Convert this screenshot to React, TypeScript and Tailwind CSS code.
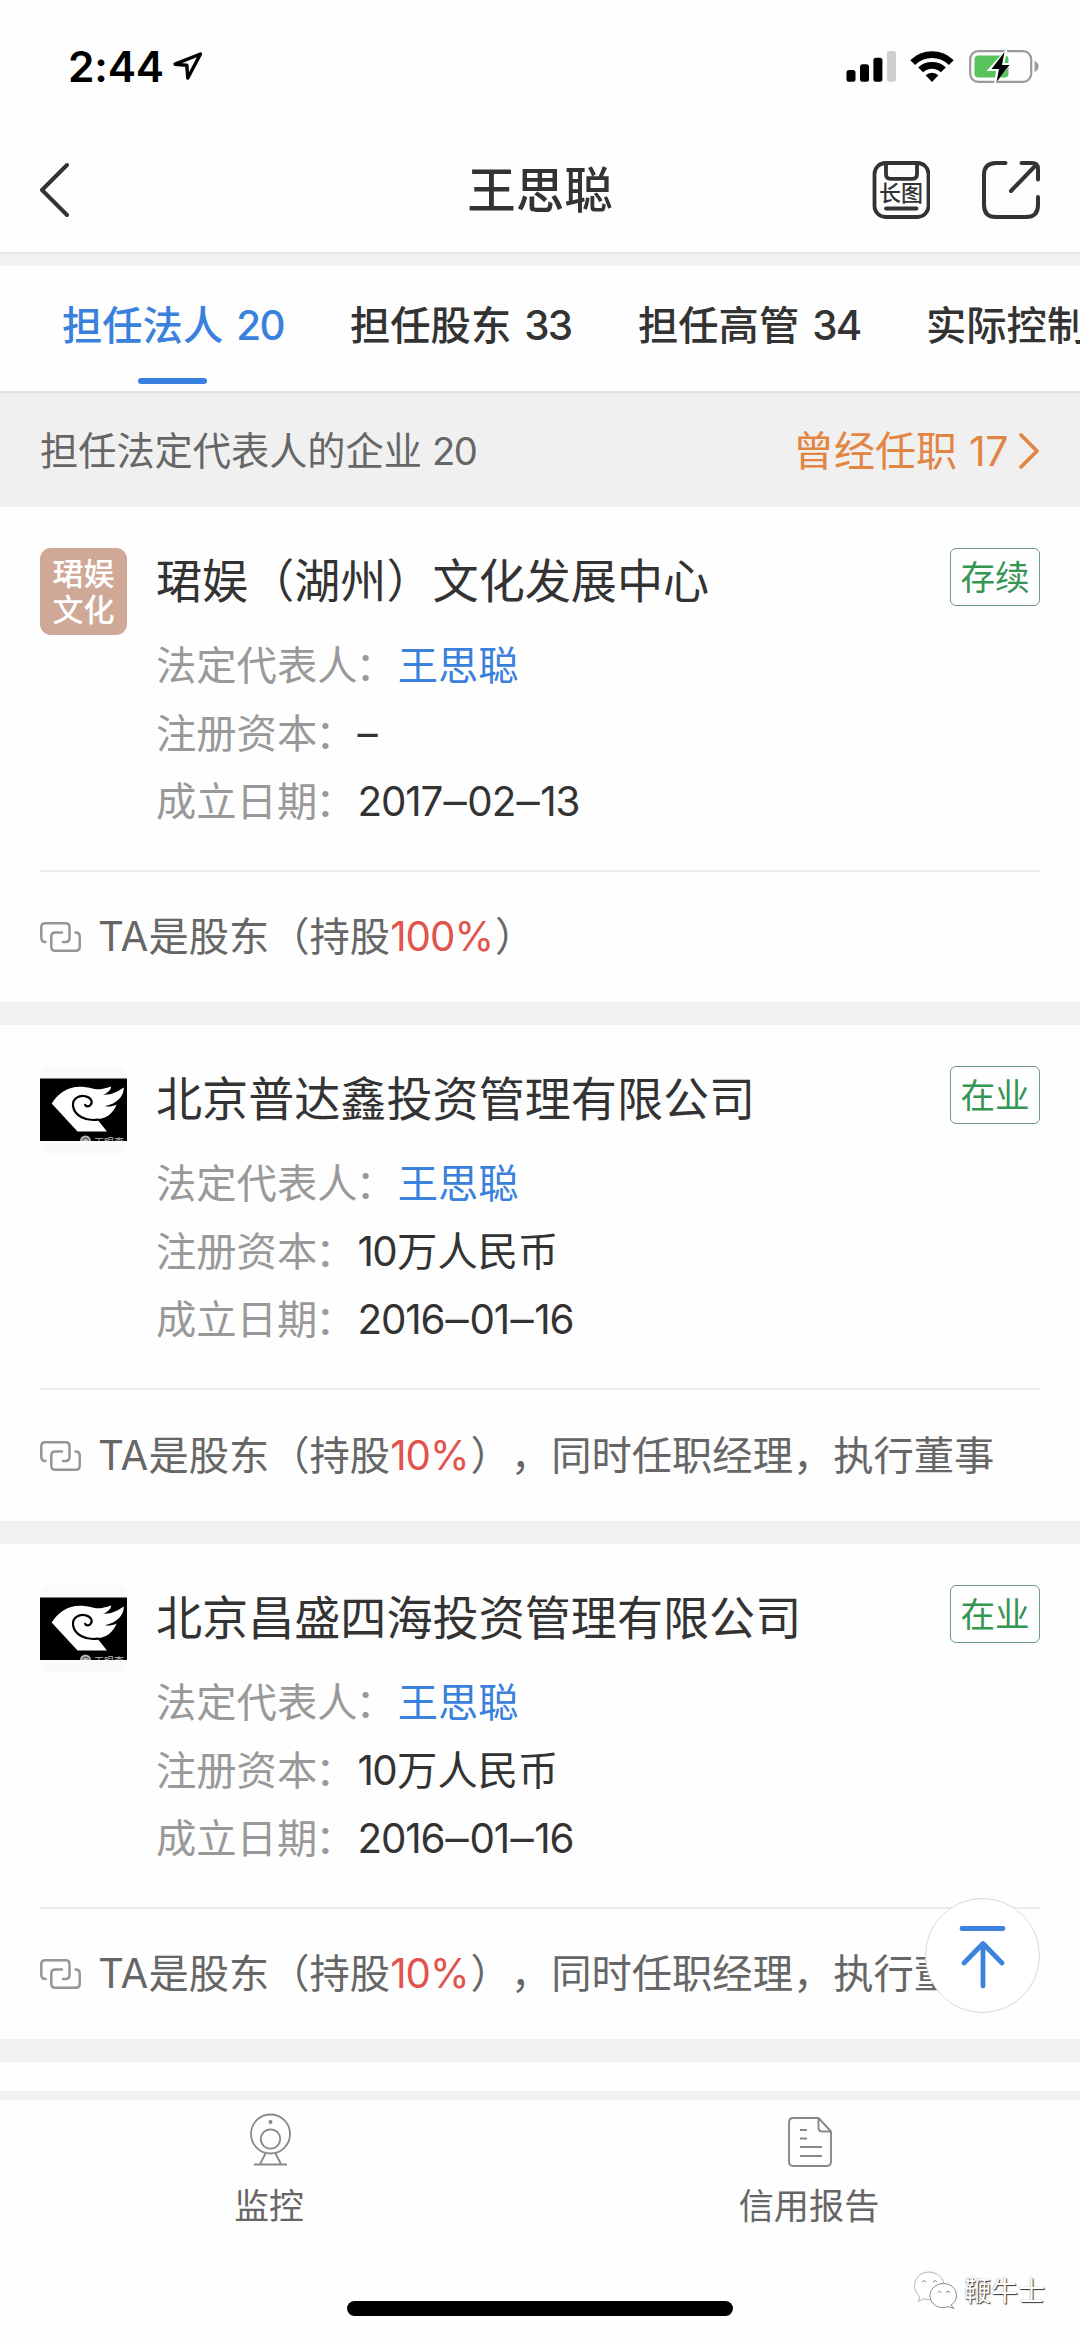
import type { ReactNode } from "react";

type Company = {
  name: string;
  status: string;
  capital: ReactNode;
  date: string;
  share: string;
  extra?: string;
  logo: ReactNode;
  height: string;
};

function StatusBar() {
  return (
    <div className="flex h-[132px] shrink-0 items-start justify-between pt-[50px] pr-[40px] pl-[68px]">
      <div className="flex h-8 items-center">
        <span className="pt-px text-[42.5px] leading-8 font-semibold tracking-[-0.2px] text-black">2:44</span>
        <svg className="ml-[8px]" width="32" height="32" viewBox="0 0 32 32" fill="none" stroke="#000" strokeWidth="3.4" strokeLinejoin="round">
          <path d="M28.5 4 L3 14.2 L14.8 15.2 L15.8 28 Z" />
        </svg>
      </div>
      <div className="flex h-8 items-start">
        <svg width="50" height="32" viewBox="0 0 50 32">
          <rect x="0.5" y="20" width="9" height="11.7" rx="2.5" />
          <rect x="14" y="14.3" width="9" height="17.4" rx="2.5" />
          <rect x="27.4" y="7.8" width="9" height="23.9" rx="2.5" />
          <rect x="41" y="1" width="9" height="30.7" rx="2" fill="#cfcfcf" />
        </svg>
        <svg className="ml-[14px]" width="44" height="33" viewBox="0 0 44 33">
          <path d="M0.3 10.2 A30.5 30.5 0 0 1 43.7 10.2 L38.9 15.1 A23.7 23.7 0 0 0 5.1 15.1 Z" />
          <path d="M8.2 17.6 A19.5 19.5 0 0 1 35.8 17.6 L30.9 22.3 A12.8 12.8 0 0 0 13.1 22.3 Z" />
          <path d="M15.6 25.3 A9 9 0 0 1 28.4 25.3 L22 32 Z" />
        </svg>
        <svg className="ml-[15px]" width="71" height="36" viewBox="0 0 71 36" fill="none">
          <rect x="1.2" y="1.2" width="61" height="30.6" rx="8" stroke="#9b9b9d" strokeWidth="2.2" />
          <path d="M65.5 11 C71 13 71 20 65.5 22 Z" fill="#9b9b9d" />
          <rect x="5.5" y="5.5" width="34" height="22" rx="4" fill="#58c35c" />
          <path d="M37.5 -1 L17.5 21 H27 L25 35 L43 13 H35.5 L38.5 -1 Z" fill="#fff" />
          <path d="M35.5 2 L22.5 19 H30 L27.5 32 L40.5 15 H33 Z" fill="#000" />
        </svg>
      </div>
    </div>
  );
}

function Header() {
  return (
    <header className="flex h-[120px] shrink-0 items-start justify-between pt-[28px] pr-[40px] pl-[40px]">
      <svg width="168" height="60" viewBox="0 0 168 60" fill="none" stroke="#333" strokeWidth="4" strokeLinecap="round" strokeLinejoin="round">
        <path d="M27 5 L2 30 L27 55" />
      </svg>
      <h1 className="pt-px text-[48.5px] leading-[60px] font-medium text-[#333]">王思聪</h1>
      <div className="flex w-[168px] gap-[52px]">
        <div className="relative h-[60px] w-[58px]">
          <svg width="58" height="60" viewBox="0 0 58 60" fill="none" stroke="#333" strokeWidth="3.8" strokeLinecap="round">
            <rect x="2.5" y="3" width="54" height="54" rx="11" />
            <path d="M14 3 V14 Q14 18.8 18.5 18.8 H40.5 Q45 18.8 45 14 V3 M14 48.5 H44.5" />
          </svg>
          <span className="absolute top-[22px] left-[7px] text-[22px] leading-[22px] font-medium whitespace-nowrap text-[#333]">长图</span>
        </div>
        <svg width="58" height="60" viewBox="0 0 58 60" fill="none" stroke="#333" strokeWidth="4" strokeLinecap="round" strokeLinejoin="round">
          <path d="M23.5 3 H14 Q2 3 2 15 V45 Q2 57 14 57 H44 Q56 57 56 45 V37" />
          <path d="M39.5 3 H50 Q56 3 56 9 V19.5 M54.5 4.5 L29 31" />
        </svg>
      </div>
    </header>
  );
}

function Tabs() {
  const tabs = [
    { label: "担任法人", count: "20" },
    { label: "担任股东", count: "33" },
    { label: "担任高管", count: "34" },
    { label: "实际控制", count: "" },
  ];
  return (
    <nav className="flex h-[127px] shrink-0 overflow-hidden border-b-2 border-[#dfdfdf] pl-[62px]">
      {tabs.map((tab, i) => (
        <div key={tab.label} className="flex w-72 shrink-0 flex-col whitespace-nowrap">
          <div className={"flex h-[112px] items-center pt-[8px] text-[40.3px] leading-[50px] font-medium " + (i === 0 ? "text-[#3a80dd]" : "text-[#333]")}>
            <span>{tab.label}</span>
            {tab.count && <span className="ml-[13px] tracking-[-1.6px]">{tab.count}</span>}
          </div>
          {i === 0 && <div className="ml-[76px] h-[6px] w-[69px] rounded-full bg-[#3a80e0]" />}
        </div>
      ))}
    </nav>
  );
}

function Summary() {
  return (
    <div className="flex h-[114px] shrink-0 items-center justify-between bg-[#f1f0f1] pt-[2px] pr-[40px] pl-[40px]">
      <span className="text-[38.2px] leading-[60px] text-[#666]">
        担任法定代表人的企业<span className="ml-[10px] tracking-[-1.5px]">20</span>
      </span>
      <span className="flex items-center pb-px text-[41px] leading-[60px] text-[#e28543]">
        曾经任职<span className="ml-[12px] tracking-[-0.5px]">17</span>
        <svg className="ml-[10px]" width="22" height="38" viewBox="0 0 22 38" fill="none" stroke="currentColor" strokeWidth="3.8" strokeLinecap="round" strokeLinejoin="round">
          <path d="M3 3 L19 19 L3 35" />
        </svg>
      </span>
    </div>
  );
}

function TextLogo() {
  return (
    <div className="flex h-[87px] w-[87px] flex-col items-center justify-center rounded-[11px] bg-[#cfa898] text-[31px] leading-[36px] font-medium text-white">
      <span>珺娱</span>
      <span>文化</span>
    </div>
  );
}

function BirdLogo() {
  return (
    <svg width="87" height="90" viewBox="0 0 87 90">
      <rect width="87" height="88" rx="11" fill="#fbfafa" />
      <rect y="12.5" width="87" height="62.5" fill="#000" />
      <path
        fill="#fff"
        d="M11.7 37.5 C18 28 27 20.8 40 20.8 C50 20.8 55 24.5 62 23 C66 22.3 69 21.2 71.2 20.6 C70.8 24.5 67 27.5 63 28.8 C71 29.3 78 25.5 83.8 21.6 C84 31 76 38 65 40.3 C69 40.8 73 40.2 76.6 38.4 C73 47.5 65.5 53.2 57 53 L67 65.5 H37.5 Z"
      />
      <path fill="none" stroke="#000" strokeWidth="2.2" strokeLinecap="round" d="M58 53.6 C46 55.5 34.5 50 33 40 C32.2 32 40 29 45 30.2 C51 31.5 53 35.5 50.8 38.7 C49 41.3 45.8 40.6 45.2 38.8" />
      <svg y="68" width="87" height="7" viewBox="0 0 87 7">
        <circle cx="45.5" cy="7" r="5.5" fill="#b5b5b5" />
        <path d="M42 6.5 Q46 1.5 49 6.5" stroke="#333" fill="none" />
        <text x="54" y="12" fontSize="10" fill="#bbb">天眼查</text>
      </svg>
    </svg>
  );
}

function LinkIcon() {
  return (
    <svg width="41" height="30" viewBox="0 0 41 30" fill="none" stroke="#969696" strokeWidth="2.5" strokeLinecap="round" strokeLinejoin="round">
      <path d="M5.5 20 Q1.3 20 1.3 16 V5.3 Q1.3 1.3 5.3 1.3 H25.5 Q29.5 1.3 29.5 5.3 V16 Q29.5 20 25.5 20 H23" />
      <path d="M35.5 10.5 Q39.7 10.5 39.7 14.5 V24.7 Q39.7 28.7 35.7 28.7 H15.3 Q11.3 28.7 11.3 24.7 V14.5 Q11.3 10.5 15.3 10.5 H22" />
    </svg>
  );
}

function Row({ label, children }: { label: string; children: ReactNode }) {
  return (
    <div className="flex h-[68px] items-center text-[40.3px] leading-[68px]">
      <span className="text-[#999]">
        {label}
        <span className="inline-block -translate-x-[2px]">：</span>
      </span>
      {children}
    </div>
  );
}

function DateText({ value }: { value: string }) {
  return (
    <span className="tracking-[-1.1px] text-[#333]">
      {value.split("–").map((part, i) => (
        <span key={i}>
          {i > 0 && <span className="mx-[3px] inline-block scale-x-115">–</span>}
          {part}
        </span>
      ))}
    </span>
  );
}

function Card({ c }: { c: Company }) {
  return (
    <article className={"flex shrink-0 flex-col bg-[#fefefe] px-[40px] " + c.height}>
      <div className="flex h-[363px] shrink-0 pt-[41px]">
        {c.logo}
        <div className="ml-[29px] flex grow flex-col">
          <div className="flex justify-between">
            <h2 className="text-[46.1px] leading-[66px] text-[#333]">{c.name}</h2>
            <span className="flex h-[58px] w-[90px] items-center justify-center rounded-[6px] border border-[#6f9d80] text-[34.6px] leading-[50px] text-[#359553]">
              {c.status}
            </span>
          </div>
          <div className="mt-[18px] flex flex-col">
            <Row label="法定代表人">
              <span className="text-[#3a80dd]">王思聪</span>
            </Row>
            <Row label="注册资本">
              <span className="text-[#333]">{c.capital}</span>
            </Row>
            <Row label="成立日期">
              <DateText value={c.date} />
            </Row>
          </div>
        </div>
      </div>
      <div className="h-[2px] shrink-0 bg-[#edebed]" />
      <div className="flex grow items-center text-[40.3px] leading-[60px] whitespace-nowrap text-[#666]">
        <LinkIcon />
        <p className="ml-[17px]">
          TA是股东（持股<span className="mr-[2px] tracking-[-1px] text-[#e0544c]">{c.share}</span>）{c.extra}
        </p>
      </div>
    </article>
  );
}

function BottomBar() {
  return (
    <footer className="flex h-[239px] shrink-0 bg-[#fefefe] text-[34.8px] leading-[50px] text-[#666]">
      <div className="flex w-1/2 flex-col items-center pt-[13px]">
        <svg width="42" height="54" viewBox="0 0 42 54" fill="none" stroke="#888" strokeWidth="1.8">
          <circle cx="21.5" cy="21" r="19.5" />
          <circle cx="21.5" cy="26" r="9.7" />
          <circle cx="21.5" cy="9" r="2" fill="#888" stroke="none" />
          <path d="M16.5 40.5 L11 51 M26.5 40.5 L32 51 M5 51.5 H38" />
        </svg>
        <span className="mt-[14px] -ml-[2px]">监控</span>
      </div>
      <div className="flex w-1/2 flex-col items-center pt-[13px]">
        <svg width="44" height="54" viewBox="0 0 44 54" fill="none" stroke="#888" strokeWidth="1.9" strokeLinejoin="round">
          <path d="M30.5 5 H5.5 Q1 5 1 9.5 V48.5 Q1 53 5.5 53 H38.5 Q43 53 43 48.5 V18.5 L30.5 5 V14.5 Q30.5 18.5 34.5 18.5 H43" />
          <path d="M12 17 H19 M12 25.5 H19 M12 34 H34 M12 43 H34" />
        </svg>
        <span className="mt-[14px] -ml-[2px] text-[35.2px]">信用报告</span>
      </div>
    </footer>
  );
}

function Watermark() {
  return (
    <div className="absolute top-[2268px] left-[913px] flex items-center">
      <svg width="46" height="40" viewBox="0 0 46 40" fill="#fff" stroke="#8a8a8a" strokeWidth="1">
        <path d="M7 27 L5 31.5 L11 28.8 Q14 30 18 29.5 C27 29 31 22 31 16 C31 8 24 2 16 2 C8 2 1.5 8 1.5 15.5 C1.5 20 3.5 24 7 27 Z" stroke="#b5b5b5" />
        <path d="M38 35 L41 38.5 L35 36.5 Q32.5 37.8 29.5 37.5 C22 37.5 17 32 17 25.5 C17 19 23 13.5 30.5 13.5 C38 13.5 43.5 19 43.5 25.5 C43.5 29.5 41.5 33 38 35 Z" />
        <path d="M9 12 q2 -3 4 0 M20 12 q2 -3 4 0 M24.5 22.5 q2 -2.6 4 0 M33 22.5 q2 -2.6 4 0" fill="none" />
      </svg>
      <span className="mt-[4px] ml-[5px] text-[27px] leading-[40px] text-white [text-shadow:1px_1px_1px_#333,0_0_1px_#777]">鞭牛士</span>
    </div>
  );
}

export default function App() {
  const extra = "，同时任职经理，执行董事";
  const tenWan = (
    <>
      <span className="mr-px tracking-[-1.6px]">10</span>万人民币
    </>
  );
  const companies: Company[] = [
    { name: "珺娱（湖州）文化发展中心", status: "存续", capital: "–", date: "2017–02–13", share: "100%", logo: <TextLogo />, height: "h-[495px]" },
    { name: "北京普达鑫投资管理有限公司", status: "在业", capital: tenWan, date: "2016–01–16", share: "10%", extra, logo: <BirdLogo />, height: "h-[496px]" },
    { name: "北京昌盛四海投资管理有限公司", status: "在业", capital: tenWan, date: "2016–01–16", share: "10%", extra, logo: <BirdLogo />, height: "h-[495px]" },
  ];
  return (
    <div lang="zh-CN" className="relative flex h-[2339px] w-[1080px] flex-col overflow-hidden bg-[#fefefe] font-['Inter','Noto_Sans_CJK_SC',sans-serif] [text-spacing-trim:space-all]">
      <StatusBar />
      <Header />
      <div className="h-[14px] shrink-0 border-t-2 border-[#e6e6e6] bg-[#f1f1f1]" />
      <Tabs />
      <Summary />
      <main className="flex h-[1593px] shrink-0 flex-col gap-[23px] overflow-hidden bg-[#f2f0f2]">
        {companies.map((c) => (
          <Card key={c.name} c={c} />
        ))}
        <div className="h-[29px] shrink-0 bg-[#fefefe]" />
      </main>
      <BottomBar />
      <button className="absolute top-[1898px] left-[925px] flex h-[115px] w-[115px] items-center justify-center rounded-full border border-[#dcd8dc] bg-white">
        <svg width="56" height="70" viewBox="0 0 56 70" fill="none" stroke="#3d82dc" strokeWidth="4.8" strokeLinecap="round" strokeLinejoin="round">
          <path d="M7 7.5 H48 M28 65 V23 M9 42 L28 22.5 L47 42" />
        </svg>
      </button>
      <Watermark />
      <div className="absolute top-[2301px] left-[347px] h-[15px] w-[386px] rounded-full bg-black" />
    </div>
  );
}
